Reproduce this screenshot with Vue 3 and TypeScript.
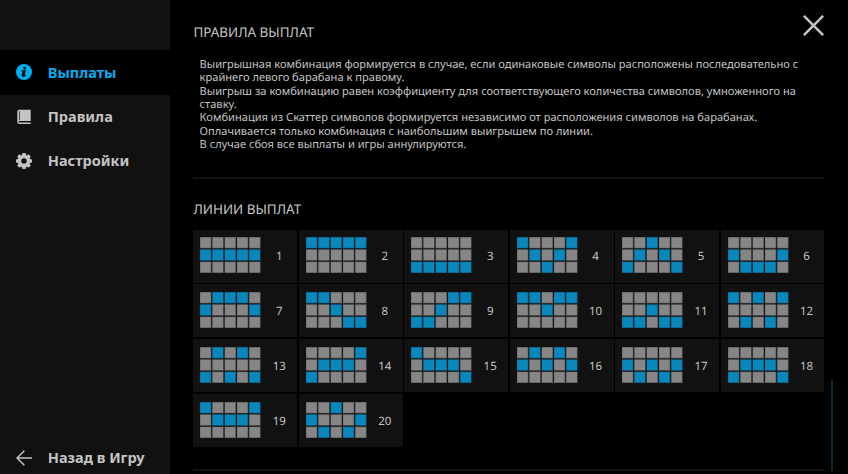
<script setup lang="ts">
interface MenuItem {
  id: string
  label: string
  active?: boolean
}

const menu: MenuItem[] = [
  { id: 'info', label: 'Выплаты', active: true },
  { id: 'book', label: 'Правила' },
  { id: 'gear', label: 'Настройки' },
]

const rules: string[][] = [
  [
    'Выигрышная комбинация формируется в случае, если одинаковые символы расположены последовательно с',
    'крайнего левого барабана к правому.',
  ],
  [
    'Выигрыш за комбинацию равен коэффициенту для соответствующего количества символов, умноженного на',
    'ставку.',
  ],
  ['Комбинация из Скаттер символов формируется независимо от расположения символов на барабанах.'],
  ['Оплачивается только комбинация с наибольшим выигрышем по линии.'],
  ['В случае сбоя все выплаты и игры аннулируются.'],
]

// Row index (0 = top) of the winning cell on each of the five reels.
const lines: string[] = [
  '11111', '00000', '22222', '01210', '21012', '12221',
  '10001', '00122', '22100', '00100', '22122', '02020',
  '20202', '21110', '01112', '10101', '12121', '21112',
  '01110', '12021',
]

const rows = [0, 1, 2]
const teeth = [0, 45, 90, 135, 180, 225, 270, 315]
</script>

<template>
  <div class="screen">
    <nav class="sidebar">
      <div class="menu">
        <button v-for="item in menu" :key="item.id" class="item" :class="{ active: item.active }">
          <svg class="icon" viewBox="0 0 16 16">
            <template v-if="item.id === 'info'">
              <circle cx="8" cy="8" r="8" fill="currentColor" />
              <circle cx="8.8" cy="4.1" r="1.45" class="cut" />
              <path class="cut" d="M5.3 6.5 9.9 6.1 8.6 11.1Q8.4 11.8 9.9 10.8L10.3 11.3Q8.6 13 7 13 5.2 12.8 5.6 11.2L6.6 7.5 5.3 7.3Z" />
            </template>
            <template v-else-if="item.id === 'book'">
              <path fill="currentColor" fill-rule="evenodd" d="M3 .7H14.7V12H3.6Q2.6 12 2.6 12.7T3.6 13.5H14.7V15H3.3Q1.3 15 1.3 13V2.5Q1.3.7 3 .7ZM3.3 2.2V10.7H4V2.2Z" />
            </template>
            <template v-else>
              <circle cx="8" cy="8" r="4.5" fill="none" stroke="currentColor" stroke-width="3.6" />
              <path v-for="a in teeth" :key="a" fill="currentColor" d="M5.8 3 6.4 0H9.6L10.2 3Z" :transform="`rotate(${a} 8 8)`" />
            </template>
          </svg>
          <span class="label">{{ item.label }}</span>
        </button>
      </div>
      <button class="item back">
        <svg class="icon" viewBox="0 0 16 16">
          <path d="M8.3.7 1 8l7.3 7.3M1 8h15" fill="none" stroke="currentColor" stroke-width="1.5" />
        </svg>
        <span class="label">Назад в Игру</span>
      </button>
    </nav>

    <main class="content">
      <section class="rules">
        <h2>ПРАВИЛА ВЫПЛАТ</h2>
        <div class="text">
          <p v-for="(rule, i) in rules" :key="i">
            <template v-for="(part, k) in rule" :key="part"><br v-if="k > 0" />{{ part }}</template>
          </p>
        </div>
      </section>
      <section class="paylines">
        <h2>ЛИНИИ ВЫПЛАТ</h2>
        <div class="cards">
          <div v-for="(line, n) in lines" :key="n" class="card">
            <svg class="reels" viewBox="0 0 61 37">
              <template v-for="(hit, c) in line" :key="c">
                <g v-for="r in rows" :key="r" :class="Number(hit) === r ? 'hit' : 'miss'">
                  <rect class="edge" :x="c * 12.3" :y="r * 12.3" width="11.4" height="11.4" />
                  <rect class="face" :x="c * 12.3 + 0.3" :y="r * 12.3 + 0.5" width="10.4" height="10.3" />
                </g>
              </template>
            </svg>
            <span class="number">{{ n + 1 }}</span>
          </div>
        </div>
      </section>
      <button class="close">
        <svg viewBox="0 0 20 20">
          <path d="M.8.8 19.2 19.2M19.2.8.8 19.2" fill="none" stroke="currentColor" stroke-width="2.4" />
        </svg>
      </button>
      <div class="scrollbar"></div>
    </main>
  </div>
</template>

<style>
body {
  background: #000;
  overflow: hidden;
}
</style>

<style scoped>
.screen {
  display: flex;
  width: 848px;
  height: 474px;
  overflow: hidden;
  background: #000;
  color: #c4c4c4;
  font-family: "Noto Sans", "Open Sans", sans-serif;
  text-rendering: geometricPrecision;
}

button {
  border: 0;
  padding: 0;
  background: none;
  color: inherit;
  font: inherit;
}

.sidebar {
  display: flex;
  flex: none;
  flex-direction: column;
  justify-content: space-between;
  box-sizing: border-box;
  width: 169.5px;
  padding-top: 50.4px;
  background: #111;
}

.menu {
  display: flex;
  flex-direction: column;
}

.item {
  display: flex;
  align-items: center;
  gap: 16.3px;
  box-sizing: border-box;
  width: 100%;
  height: 44.2px;
  padding-left: 15.5px;
  font-size: 14.5px;
  font-weight: 700;
  line-height: 20px;
  white-space: nowrap;
}

.item.active {
  background: #000;
  color: #00aeef;
}

.item.back {
  height: 32px;
}

.label {
  padding-bottom: 1.6px;
}

.icon {
  flex: none;
  width: 16px;
  height: 16px;
}

.cut {
  fill: #000;
}

.content {
  position: relative;
  flex: 1;
  min-width: 0;
  padding: 0 23.6px 0 23.9px;
}

h2 {
  margin: 0;
  font-size: 13.45px;
  font-weight: 400;
  line-height: 18px;
}

.rules {
  box-sizing: border-box;
  height: 179px;
  padding-top: 23px;
  border-bottom: 2px solid #111;
}

.text {
  padding: 17.1px 0 0 6.2px;
  font-size: 11.1px;
  line-height: 13.3px;
  white-space: nowrap;
}

p {
  margin: 0;
}

.paylines {
  box-sizing: border-box;
  height: 292px;
  padding-top: 21px;
  border-bottom: 2px solid #111;
}

.cards {
  display: grid;
  grid-template-columns: repeat(6, minmax(0, 1fr));
  grid-auto-rows: 53px;
  gap: 1.9px 1.6px;
  padding-top: 11.6px;
}

.card {
  display: flex;
  align-items: center;
  padding-left: 7px;
  background: #111;
}

.reels {
  flex: none;
  width: 61px;
  height: 37px;
  margin-bottom: 1px;
}

.miss .edge {
  fill: #555;
}

.miss .face {
  fill: #868686;
}

.hit .edge {
  fill: #07577a;
}

.hit .face {
  fill: #0b88bb;
}

.number {
  flex: 1;
  padding-top: 2px;
  font-size: 11.5px;
  line-height: 14px;
  text-align: center;
}

.close {
  position: absolute;
  top: 15px;
  right: 24px;
  width: 21px;
  height: 21px;
}

.close svg {
  display: block;
  width: 21px;
  height: 21px;
}

.scrollbar {
  position: absolute;
  top: 380px;
  right: 15px;
  width: 2px;
  height: 91px;
  background: #03293a;
}
</style>
